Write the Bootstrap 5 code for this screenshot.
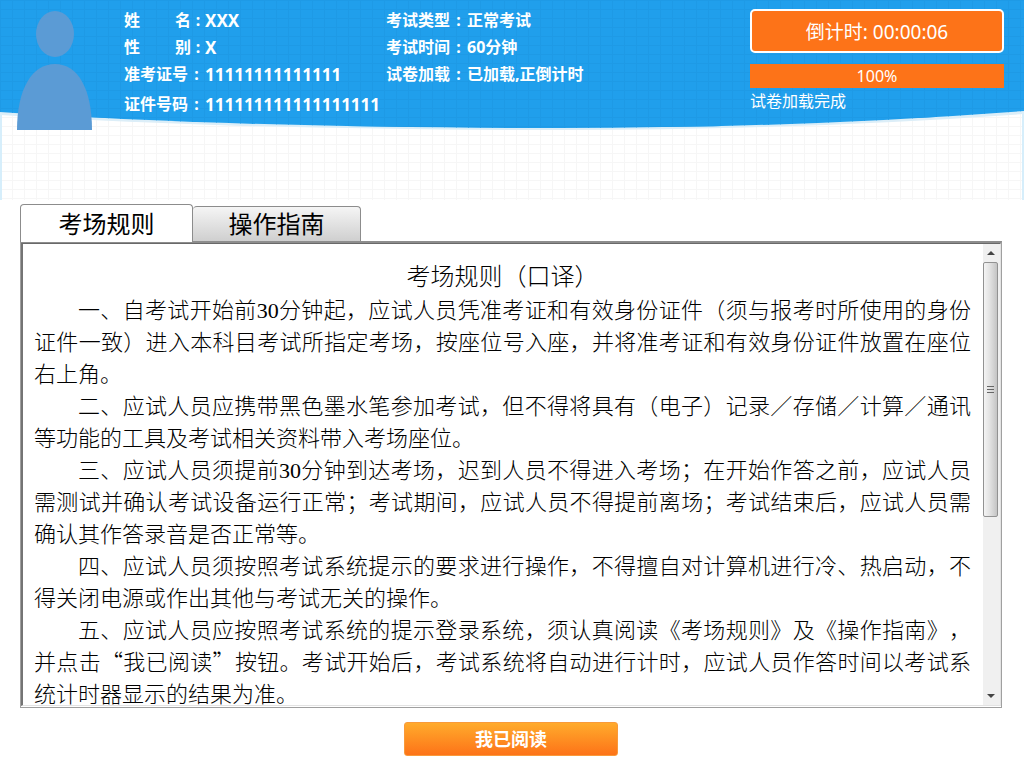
<!DOCTYPE html>
<html lang="zh-CN">
<head>
<meta charset="utf-8">
<meta name="viewport" content="width=device-width, initial-scale=1">
<title>考场规则</title>
<link href="https://cdn.jsdelivr.net/npm/bootstrap@5.3.0/dist/css/bootstrap.min.css" rel="stylesheet">
<style>
  body { font-family: "Noto Sans", "Noto Sans CJK SC", sans-serif; color: #000; background: #fff; }
  .exam-head { height: 200px; padding: 0 20px 0 17px; }
  .head-bg { position: absolute; inset: 0; width: 100%; height: 100%; z-index: -1; }
  .avatar { width: 75px; height: 119px; margin: 11px 32px 0 0; flex: none; }
  .info-col { padding-top: 7px; color: #fff; font-size: 16px; font-weight: 700; }
  .info-main { width: 262px; }
  .info-line { height: 27px; line-height: 27px; white-space: nowrap; }
  .info-line.id-line { margin-top: 3px; }
  .lbl { width: 64px; }
  .lbl-wide { width: 67px; }
  .sep { width: 17px; text-align: center; }
  .lbl-wide + .sep { width: 14px; }
  .info-main .val { font-size: 17px; }
  .status-col { width: 254px; padding-top: 9px; color: #fff; font-size: 16px; }
  .countdown { height: 44px; line-height: 42px; border: 2px solid #fff; border-radius: 5px; background: #fd7318; font-size: 19px; }
  .load-bar { height: 24px; margin-top: 11px; border-radius: 0; background: #1a86c9; font-size: 16px; }
  .load-bar .progress-bar { background: #fd7318; }
  .load-note { line-height: 26px; }
  .exam-main { padding: 4px 22px 0 20px; }
  .tab-row { height: 37px; }
  .tab-btn { border: 1px solid #8c8c8c; border-bottom: 0; border-radius: 4px 4px 0 0; padding: 0; font-size: 24px; line-height: 34px; background: #fff; }
  .tab-btn.is-open { width: 173px; height: 38px; position: relative; }
  .tab-btn.is-idle { width: 168px; height: 35px; border-left: 0; background: linear-gradient(#f5f5f5, #cfcfcf); }
  .panel-box { height: 467px; border: 1px solid #a0a0a0; border-top: 2px solid #8d8d8d; padding-bottom: 1px; }
  .panel-in { border-left: 2px solid #747474; border-top: 1px solid #696969; border-bottom: 1px solid #e3e3e3; border-right: 1px solid #e3e3e3; }
  .rules { padding: 16px 12px 0 11px; font-family: "Liberation Serif", "Noto Sans CJK SC", serif; font-weight: 300; overflow: hidden; text-spacing-trim: space-all; }
  .rules h1 { font-size: 24px; line-height: 35px; font-weight: 300; margin: 0; }
  .rules p { font-size: 22px; line-height: 32px; text-indent: 44px; text-align: justify; margin: 0; }
  .rules .q { font-family: "Noto Sans CJK SC", sans-serif; line-height: 1; }
  .scroll-rail { width: 17px; background: #f0f0f0; flex: none; }
  .scroll-rail svg { display: block; }
  .rail-btn { height: 18px; width: 15px; padding: 0; border: 0; background: none; }
  .thumb { width: 15px; height: 255px; border: 1px solid #929292; border-radius: 2px; background: linear-gradient(90deg, #f4f4f4, #e2e2e2 45%, #c4c4c4); }
  .ok-btn { width: 214px; height: 34px; margin-top: 14px; padding: 0; border: 1px solid #f99a3a; border-radius: 3px; background: linear-gradient(#ffab2c, #fd7318); color: #fff; font-size: 18px; font-weight: 700; line-height: 30px; }
</style>
</head>
<body>
<header class="exam-head position-relative d-flex align-items-start" style="z-index:0">
  <svg class="head-bg" viewBox="0 0 1024 200" preserveAspectRatio="none" aria-hidden="true">
    <defs>
      <pattern id="gridLight" width="12" height="9" patternUnits="userSpaceOnUse">
        <path d="M0 .5H12M.5 0V9" stroke="#f6f6f6" fill="none"/>
      </pattern>
      <pattern id="gridBlue" width="12" height="9" patternUnits="userSpaceOnUse">
        <path d="M0 .5H12M.5 0V9" stroke="#1e9ae6" fill="none"/>
      </pattern>
    </defs>
    <rect width="1024" height="200" fill="url(#gridLight)"/>
    <path d="M1 112V200M1023 112V200" stroke="#d6eefb" stroke-width="2"/>
    <path d="M0 0H1024V114Q800 130 560 130Q240 130 0 115Z" fill="#dceef8"/>
    <path d="M0 0H1024V111Q800 128 560 128Q240 128 0 112Z" fill="#209fec"/>
    <path d="M0 0H1024V111Q800 128 560 128Q240 128 0 112Z" fill="url(#gridBlue)"/>
  </svg>
  <svg class="avatar" viewBox="0 0 75 119" role="img" aria-label="考生照片">
    <ellipse cx="38" cy="23" rx="19" ry="23" fill="#5b9bd5"/>
    <path d="M0 119C0 78 15 53 38 53S75 78 75 119Z" fill="#5b9bd5"/>
  </svg>
  <div class="info-col info-main">
    <div class="info-line d-flex"><span class="lbl-wide d-flex justify-content-between"><span>姓</span><span>名</span></span><span class="sep">:</span><span class="val">XXX</span></div>
    <div class="info-line d-flex"><span class="lbl-wide d-flex justify-content-between"><span>性</span><span>别</span></span><span class="sep">:</span><span class="val">X</span></div>
    <div class="info-line d-flex"><span class="lbl">准考证号</span><span class="sep">:</span><span class="val">11111111111111</span></div>
    <div class="info-line id-line d-flex"><span class="lbl">证件号码</span><span class="sep">:</span><span class="val">111111111111111111</span></div>
  </div>
  <div class="info-col">
    <div class="info-line d-flex"><span class="lbl">考试类型</span><span class="sep">:</span><span>正常考试</span></div>
    <div class="info-line d-flex"><span class="lbl">考试时间</span><span class="sep">:</span><span>60分钟</span></div>
    <div class="info-line d-flex"><span class="lbl">试卷加载</span><span class="sep">:</span><span>已加载,正倒计时</span></div>
  </div>
  <div class="status-col ms-auto">
    <div class="countdown text-center">倒计时: 00:00:06</div>
    <div class="load-bar progress" role="progressbar" aria-label="试卷加载" aria-valuenow="100" aria-valuemin="0" aria-valuemax="100">
      <div class="progress-bar" style="width:100%">100%</div>
    </div>
    <div class="load-note">试卷加载完成</div>
  </div>
</header>

<main class="exam-main">
  <div class="tab-row d-flex align-items-start" role="tablist">
    <button class="tab-btn is-open" type="button" role="tab" aria-selected="true">考场规则</button>
    <button class="tab-btn is-idle align-self-end" type="button" role="tab" aria-selected="false">操作指南</button>
  </div>
  <div class="panel-box">
    <div class="panel-in d-flex h-100">
      <article class="rules flex-grow-1">
        <h1 class="text-center">考场规则（口译）</h1>
        <p>一、自考试开始前30分钟起，应试人员凭准考证和有效身份证件（须与报考时所使用的身份证件一致）进入本科目考试所指定考场，按座位号入座，并将准考证和有效身份证件放置在座位右上角。</p>
        <p>二、应试人员应携带黑色墨水笔参加考试，但不得将具有（电子）记录／存储／计算／通讯等功能的工具及考试相关资料带入考场座位。</p>
        <p>三、应试人员须提前30分钟到达考场，迟到人员不得进入考场；在开始作答之前，应试人员需测试并确认考试设备运行正常；考试期间，应试人员不得提前离场；考试结束后，应试人员需确认其作答录音是否正常等。</p>
        <p>四、应试人员须按照考试系统提示的要求进行操作，不得擅自对计算机进行冷、热启动，不得关闭电源或作出其他与考试无关的操作。</p>
        <p>五、应试人员应按照考试系统的提示登录系统，须认真阅读《考场规则》及《操作指南》，并点击<span class="q">“</span>我已阅读<span class="q">”</span>按钮。考试开始后，考试系统将自动进行计时，应试人员作答时间以考试系统计时器显示的结果为准。</p>
      </article>
      <div class="scroll-rail d-flex flex-column">
        <button class="rail-btn" type="button" aria-label="向上滚动"><svg width="15" height="18"><path d="M4 11L8 7L12 11Z" fill="#444"/></svg></button>
        <div class="thumb d-flex align-items-center justify-content-center"><svg width="7" height="9"><path d="M0 1.5H7M0 4.5H7M0 7.5H7" stroke="#666"/></svg></div>
        <button class="rail-btn mt-auto" type="button" aria-label="向下滚动"><svg width="15" height="18"><path d="M4 7L8 11L12 7Z" fill="#444"/></svg></button>
      </div>
    </div>
  </div>
  <div class="text-center">
    <button class="ok-btn" type="button">我已阅读</button>
  </div>
</main>
<script src="https://cdn.jsdelivr.net/npm/bootstrap@5.3.0/dist/js/bootstrap.bundle.min.js"></script>
</body>
</html>
